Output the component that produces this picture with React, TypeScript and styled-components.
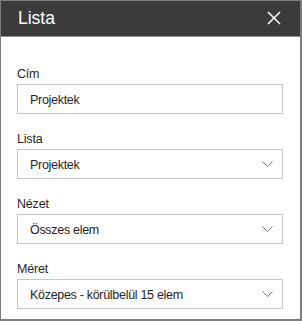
import React from 'react'
import styled, { createGlobalStyle } from 'styled-components';

const GlobalStyle = createGlobalStyle`
    body {
        margin: 0;
        background: #ffffff;
        font-family: "Liberation Sans", Arial, sans-serif;
    }
`;

const fields = [
    { label: "Cím", value: "Projektek", select: false },
    { label: "Lista", value: "Projektek", select: true },
    { label: "Nézet", value: "Összes elem", select: true },
    { label: "Méret", value: "Közepes - körülbelül 15 elem", select: true },
];

const Chevron = () => (
    <svg width="11" height="6" viewBox="0 0 11 6">
        <path d="M0.5 0.5 L5.5 5.5 L10.5 0.5" fill="none" stroke="#7a7a7a" strokeWidth="1" />
    </svg>
);

const CloseIcon = () => (
    <svg width="14" height="14" viewBox="0 0 14 14">
        <path d="M1 1 L13 13 M13 1 L1 13" stroke="#ffffff" strokeWidth="1.5" fill="none" />
    </svg>
);

const App = () => {
  return (
    <>
        <GlobalStyle />
        <Panel>
            <Header>
                <Title>Lista</Title>
                <CloseButton><CloseIcon /></CloseButton>
            </Header>
            <Body>
                {fields.map((f) => (
                    <Field key={f.label}>
                        <Label>{f.label}</Label>
                        <Box>
                            <Value>{f.value}</Value>
                            {f.select && <Chevron />}
                        </Box>
                    </Field>
                ))}
            </Body>
        </Panel>
    </>
  )
}

export default App;

const Panel = styled.div`
    width: 302px;
    height: 321px;
    box-sizing: border-box;
    border: 1px solid #7d7d7d;
    border-right-width: 2px;
    border-bottom-width: 2px;
    background: #ffffff;
    display: flex;
    flex-direction: column;
`;
const Header = styled.div`
    height: 35px;
    background-color: #3b3b3b;
    border-bottom: 1px solid #8c8c8c;
    display: flex;
    align-items: center;
    justify-content: space-between;
    padding: 0 19px 0 17px;
`;
const Title = styled.div`
    color: #ffffff;
    font-size: 17.5px;
    padding-bottom: 1px;
`;
const CloseButton = styled.div`
    display: flex;
    align-items: center;
    padding-bottom: 1px;
`;
const Body = styled.div`
    display: flex;
    flex-direction: column;
    gap: 15px;
    padding: 27px 17px 0 16px;
`;
const Field = styled.div`
    display: flex;
    flex-direction: column;
`;
const Label = styled.div`
    height: 20px;
    line-height: 21px;
    font-size: 12.5px;
    letter-spacing: -0.2px;
    color: #262626;
`;
const Box = styled.div`
    height: 30px;
    box-sizing: border-box;
    border: 1px solid #c8c8c8;
    display: flex;
    align-items: center;
    justify-content: space-between;
    padding: 0 9px 0 12px;
`;
const Value = styled.span`
    font-size: 12.5px;
    letter-spacing: -0.3px;
    color: #262626;
    padding-top: 1px;
`;
